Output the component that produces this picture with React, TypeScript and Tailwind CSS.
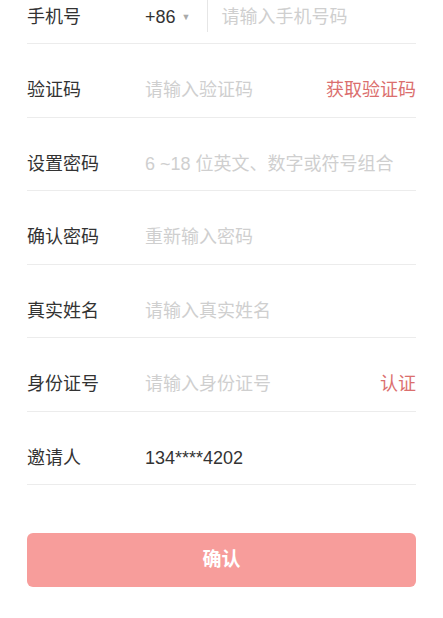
import React from 'react';

type Row = {
  label: string;
  placeholder?: string;
  value?: string;
  action?: string;
  phone?: boolean;
};

const rows: Row[] = [
  { label: '手机号', placeholder: '请输入手机号码', phone: true },
  { label: '验证码', placeholder: '请输入验证码', action: '获取验证码' },
  { label: '设置密码', placeholder: '6 ~18 位英文、数字或符号组合' },
  { label: '确认密码', placeholder: '重新输入密码' },
  { label: '真实姓名', placeholder: '请输入真实姓名' },
  { label: '身份证号', placeholder: '请输入身份证号', action: '认证' },
  { label: '邀请人', value: '134****4202' },
];

export default function App() {
  return (
    <div
      className="min-h-[618px] bg-white px-[27px] overflow-hidden text-[18px] text-[#333]"
      style={{ fontFamily: '"Liberation Sans", "Noto Sans CJK SC", sans-serif' }}
    >
      <div className="mt-[-29.5px]">
        {rows.map((r) => (
          <div
            key={r.label}
            className="flex items-center h-[73.5px] pt-[21px] border-b border-[#ececec]"
          >
            <span className="w-[118px] shrink-0">{r.label}</span>
            {r.phone && (
              <div className="flex items-center shrink-0">
                <span>+86</span>
                <span className="ml-[6px] text-[#aaa] text-[9px]">▼</span>
                <span className="ml-[17px] mr-[13px] w-px h-[34px] bg-[#e6e6e6] -mt-[4px]" />
              </div>
            )}
            <span className={r.value ? 'flex-1 text-[#333]' : 'flex-1 text-[#cfcfcf]'}>
              {r.value ?? r.placeholder}
            </span>
            {r.action && <span className="text-[#db6f6e] shrink-0">{r.action}</span>}
          </div>
        ))}
      </div>
      <button className="mt-[48px] w-full h-[54px] rounded-[6px] bg-[#f79d9b] text-white text-[19px] font-bold">
        确认
      </button>
    </div>
  );
}
